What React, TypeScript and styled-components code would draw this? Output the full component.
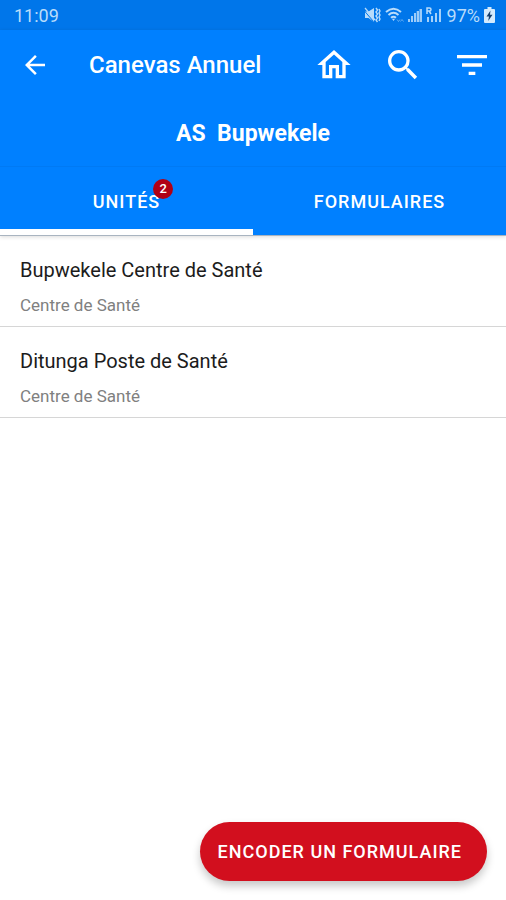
import React, { useState } from "react";
import styled, { createGlobalStyle } from "styled-components";

const GlobalStyle = createGlobalStyle`
  * { box-sizing: border-box; }
  body {
    margin: 0;
    background: #ffffff;
    font-family: Roboto, "Liberation Sans", sans-serif;
  }
  button { font-family: inherit; border: 0; padding: 0; cursor: pointer; }
`;

const Screen = styled.div`
  display: flex;
  flex-direction: column;
  min-height: 100vh;
`;

const StatusBar = styled.div`
  display: flex;
  align-items: center;
  justify-content: space-between;
  height: 30px;
  padding: 0 11px 0 14px;
  background: #0076ea;
  color: #b8dcfb;
  font-size: 18px;
`;

const StatusIcons = styled.div`
  display: flex;
  align-items: center;
  gap: 4px;
  svg { display: block; }
`;

const BatteryLevel = styled.span`
  margin-left: 2px;
`;

const Header = styled.header`
  background: #0080ff;
  color: #ffffff;
  border-bottom: 1px solid #a9b4c0;
  box-shadow: 0 1px 4px rgba(0, 0, 0, 0.14);
`;

const AppBar = styled.div`
  display: flex;
  align-items: center;
  height: 69px;
  padding: 0 14px 0 20px;
`;

const IconButton = styled.button<{ $size: number }>`
  display: flex;
  width: ${(p) => p.$size}px;
  height: ${(p) => p.$size}px;
  background: none;
  color: inherit;
  svg { width: 100%; height: 100%; fill: currentColor; }
`;

const PageTitle = styled.h1`
  flex: 1;
  margin: 0 0 0 39px;
  font-size: 24px;
  font-weight: 500;
  line-height: 32px;
  white-space: nowrap;
`;

const Actions = styled.div`
  display: flex;
  gap: 29px;
`;

const AreaTitle = styled.h2`
  margin: 0;
  height: 68px;
  border-bottom: 1px solid #007af4;
  font-size: 23px;
  font-weight: 700;
  line-height: 70px;
  text-align: center;
  white-space: pre;
`;

const Tabs = styled.div`
  display: grid;
  grid-template-columns: 1fr 1fr;
`;

const Tab = styled.button<{ $active: boolean }>`
  height: 68px;
  border-top: 6px solid transparent;
  border-bottom: 6px solid ${(p) => (p.$active ? "#ffffff" : "transparent")};
  background: none;
  color: #ffffff;
  font-size: 18px;
  font-weight: 500;
  letter-spacing: 1px;
`;

const TabLabel = styled.span`
  position: relative;
`;

const Badge = styled.span`
  position: absolute;
  top: -12px;
  right: -13px;
  width: 20px;
  height: 20px;
  border-radius: 50%;
  background: #b00015;
  font-size: 13px;
  line-height: 20px;
  letter-spacing: 0;
  text-align: center;
`;

const UnitList = styled.ul`
  flex: 1;
  margin: 0;
  padding: 0;
  list-style: none;
`;

const UnitRow = styled.li`
  padding: 20px 20px 7px;
  border-bottom: 1px solid #d6d6d6;
`;

const UnitName = styled.div`
  color: #1c1c1c;
  font-size: 20px;
  line-height: 28px;
`;

const UnitType = styled.div`
  margin-top: 7px;
  color: #808080;
  font-size: 17px;
  line-height: 28px;
`;

const Footer = styled.footer`
  position: sticky;
  bottom: 0;
  display: flex;
  justify-content: flex-end;
  padding: 19px;
`;

const EncodeButton = styled.button`
  height: 59px;
  padding: 0 25px 0 18px;
  border-radius: 30px;
  background: #d20f1e;
  color: #ffffff;
  box-shadow: 0 5px 8px rgba(0, 0, 0, 0.22);
  font-size: 18px;
  font-weight: 500;
  letter-spacing: 1px;
  white-space: nowrap;
`;

const units = [
  { name: "Bupwekele Centre de Santé", type: "Centre de Santé" },
  { name: "Ditunga Poste de Santé", type: "Centre de Santé" },
];

const MutedIcon = () => (
  <svg width="17" height="18" viewBox="0 0 17 18" fill="currentColor">
    <path d="M1 5.500h3.500L10 2v14l-5.500-4H1z" />
    <path d="M0 4.500l9.500 11" stroke="#0076ea" strokeWidth="1" />
    <path d="M1 2l10 12" stroke="currentColor" strokeWidth="1.200" />
    <path d="M12 2l1.500 2-1.500 2 1.500 2-1.500 2 1.500 2-1.500 2 1.500 2M15 3l1 2-1 2 1 2-1 2 1 2-1 2" fill="none" stroke="currentColor" strokeWidth="1.400" />
  </svg>
);

const WifiIcon = () => (
  <svg width="19" height="18" viewBox="0 0 19 18" fill="none" stroke="currentColor" strokeWidth="2">
    <path d="M1 6q7.500-6.500 15 0M3.500 8.900q5-4.200 10 0M6 11.800q2.500-2 5 0" />
    <path d="M8.500 15l-1.600-2.200h3.200z" fill="currentColor" stroke="none" />
    <path d="M12 13.500l1.500 2 1.500-2M15.500 15.500l1.500-2 1.500 2" strokeWidth="1" opacity=".5" />
  </svg>
);

const SignalIcon = () => (
  <svg width="14" height="16" viewBox="0 0 14 16" fill="currentColor">
    <path d="M0 12h2v3H0zM3 9h2v6H3zM6 6h2v9H6zM8.700 4H11v11H8.700zM11.500 2H14v13h-2.500z" opacity=".85" />
  </svg>
);

const RoamingSignalIcon = () => (
  <svg width="15" height="18" viewBox="0 0 15 18" fill="currentColor">
    <path d="M1 8V2h2.500q1.500 0 1.500 1.500T3.500 5H1M3.200 5L5 8" fill="none" stroke="currentColor" strokeWidth="1.500" />
    <path d="M1 11h2v5H1zM5 10h2v6H5zM9 7h2v9H9zM13 3h2v13h-2z" opacity=".9" />
  </svg>
);

const BatteryIcon = () => (
  <svg width="11" height="16" viewBox="0 0 11 16">
    <path d="M3.500 0h4v2H10q1 0 1 1v12q0 1-1 1H1q-1 0-1-1V3q0-1 1-1h2.500z" fill="#d5ebfd" />
    <path d="M6.500 3.500L2.500 9.500H5l-.8 4.500 4.300-6.300H6z" fill="#173f6c" />
  </svg>
);

export default function App() {
  const [active, setActive] = useState(0);
  return (
    <>
      <GlobalStyle />
      <Screen>
        <StatusBar>
          <span>11:09</span>
          <StatusIcons>
            <MutedIcon />
            <WifiIcon />
            <SignalIcon />
            <RoamingSignalIcon />
            <BatteryLevel>97%</BatteryLevel>
            <BatteryIcon />
          </StatusIcons>
        </StatusBar>
        <Header>
          <AppBar>
            <IconButton $size={30} aria-label="Retour">
              <svg viewBox="0 0 24 24">
                <path d="M20 11H7.830l5.590-5.590L12 4l-8 8 8 8 1.410-1.410L7.830 13H20z" />
              </svg>
            </IconButton>
            <PageTitle>Canevas Annuel</PageTitle>
            <Actions>
              <IconButton $size={40} aria-label="Accueil">
                <svg viewBox="0 0 24 24">
                  <path d="M12 5.690l5 4.500V18h-2v-6H9v6H7v-7.810l5-4.500M12 3L2 12h3v8h6v-6h2v6h6v-8h3z" />
                </svg>
              </IconButton>
              <IconButton $size={40} aria-label="Rechercher">
                <svg viewBox="0 0 24 24">
                  <path d="M15.500 14h-.79l-.28-.27A6.471 6.471 0 0 0 16 9.500 6.500 6.500 0 1 0 9.500 16c1.610 0 3.090-.59 4.230-1.570l.27.28v.79l5 4.990L20.490 19zm-6 0C7.010 14 5 11.990 5 9.500S7.010 5 9.500 5 14 7.010 14 9.500 11.990 14 9.500 14z" />
                </svg>
              </IconButton>
              <IconButton $size={40} aria-label="Filtrer">
                <svg viewBox="0 0 24 24">
                  <path d="M10 18h4v-2h-4zM3 6v2h18V6zm3 7h12v-2H6z" />
                </svg>
              </IconButton>
            </Actions>
          </AppBar>
          <AreaTitle>{"AS  Bupwekele"}</AreaTitle>
          <Tabs role="tablist">
            <Tab role="tab" aria-selected={active === 0} $active={active === 0} onClick={() => setActive(0)}>
              <TabLabel>
                UNITÉS
                <Badge>2</Badge>
              </TabLabel>
            </Tab>
            <Tab role="tab" aria-selected={active === 1} $active={active === 1} onClick={() => setActive(1)}>
              <TabLabel>FORMULAIRES</TabLabel>
            </Tab>
          </Tabs>
        </Header>
        <UnitList>
          {units.map((unit) => (
            <UnitRow key={unit.name}>
              <UnitName>{unit.name}</UnitName>
              <UnitType>{unit.type}</UnitType>
            </UnitRow>
          ))}
        </UnitList>
        <Footer>
          <EncodeButton>ENCODER UN FORMULAIRE</EncodeButton>
        </Footer>
      </Screen>
    </>
  );
}
